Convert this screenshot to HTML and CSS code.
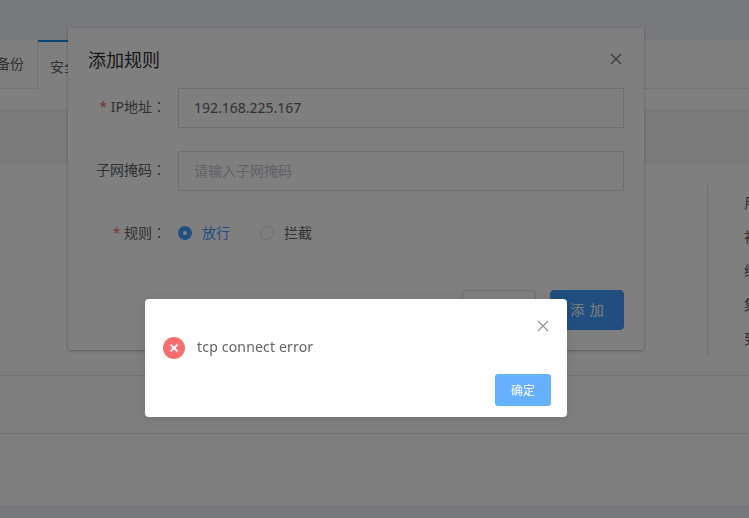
FILE: index.html
```html
<!DOCTYPE html>
<html lang="zh-CN">
<head>
<meta charset="utf-8">
<title>添加规则</title>
<link rel="stylesheet" href="styles.css">
</head>
<body>
<div class="page">
  <header class="topbar"></header>
  <nav class="tabs">
    <div class="tab tab-clipped"><span>数据备份</span></div>
    <div class="tab tab-active">安全设置</div>
  </nav>
  <div class="spacer"></div>
  <div class="band"></div>
  <main class="content">
    <div class="content-main"></div>
    <aside class="side">
      <p>用户</p>
      <p>视频</p>
      <p>级联</p>
      <p>集群</p>
      <p>到期</p>
    </aside>
  </main>
  <div class="row"></div>
  <div class="row row-tall"></div>
</div>

<section class="dialog">
  <header class="dialog-head">
    <h2 class="dialog-title">添加规则</h2>
    <svg class="close close-dark" viewBox="0 0 12 12"><path d="M1 1l10 10M11 1L1 11"/></svg>
  </header>
  <form class="form">
    <div class="field">
      <label class="label"><i class="req">*</i> IP地址<span class="colon" lang="zh-TW">：</span></label>
      <div class="input">192.168.225.167</div>
    </div>
    <div class="field">
      <label class="label">子网掩码<span class="colon" lang="zh-TW">：</span></label>
      <div class="input input-empty">请输入子网掩码</div>
    </div>
    <div class="field">
      <label class="label"><i class="req">*</i> 规则<span class="colon" lang="zh-TW">：</span></label>
      <div class="radios">
        <span class="radio radio-on"><b class="dot"></b><span class="radio-text">放行</span></span>
        <span class="radio"><b class="dot"></b><span class="radio-text">拦截</span></span>
      </div>
    </div>
  </form>
  <footer class="dialog-foot">
    <button type="button" class="btn">取 消</button>
    <button type="button" class="btn btn-primary">添 加</button>
  </footer>
</section>

<div class="mask"></div>

<section class="msgbox">
  <svg class="close close-light" viewBox="0 0 12 12"><path d="M1 1l10 10M11 1L1 11"/></svg>
  <div class="msg-body">
    <svg class="err" viewBox="0 0 22 22"><circle cx="11" cy="11" r="11"/><path d="M7.6 7.6l6.8 6.8M14.4 7.6l-6.8 6.8"/></svg>
    <p class="msg-text">tcp connect error</p>
  </div>
  <div class="msg-foot">
    <button type="button" class="msg-btn">确定</button>
  </div>
</section>
</body>
</html>
```
FILE: styles.css
```css
* { box-sizing: border-box; }
html, body { margin: 0; height: 518px; overflow: hidden; }
body {
  font-family: "Noto Sans", "Noto Sans CJK SC", sans-serif;
  font-size: 14px;
  color: #606266;
  background: #f0f3f9;
}
.page { height: 507px; background: #fff; border-bottom: 1px solid #e4e4e4; }
.topbar { height: 40px; background: #f0f3f9; }
.tabs { display: flex; align-items: flex-start; height: 49px; background: #fff; border-bottom: 1px solid #e8e8e8; }
.tab { display: flex; align-items: center; height: 49px; padding-bottom: 2px; font-size: 14px; white-space: nowrap; background: #fff; }
.tab-clipped { width: 38px; justify-content: flex-end; padding-right: 13px; overflow: hidden; border-right: 1px solid #e4e7ed; border-bottom: 1px solid #e4e7ed; }
.tab-active { padding: 0 13px 0 12px; border-top: 2px solid #1e88e5; }
.spacer { height: 20px; }
.band { height: 55px; background: #f4f4f4; }
.content { display: flex; height: 212px; border-bottom: 1px solid #e4e4e4; padding-top: 21px; overflow: hidden; }
.content-main { width: 707px; flex: none; }
.side { flex: none; width: 80px; height: 170px; border-left: 1px solid #e4e4e4; padding: 1px 0 0 36px; font-size: 14px; }
.side p { margin: 0; height: 34px; line-height: 34px; white-space: nowrap; }
.row { height: 58px; border-bottom: 1px solid #e4e4e4; }
.row-tall { height: 72px; border-bottom: 0; }

.dialog {
  position: absolute; left: 68px; top: 28px;
  display: flex; flex-direction: column;
  width: 576px; height: 322px; padding: 0 20px 20px;
  background: #fff; border-radius: 2px;
  box-shadow: 0 1px 3px rgba(0, 0, 0, .3);
}
.dialog-head { display: flex; justify-content: space-between; align-items: center; height: 60px; padding: 2px 0 0; }
.dialog-title { margin: 0; font-size: 18px; font-weight: 400; color: #303133; }
.close { width: 12px; height: 12px; fill: none; stroke-width: 1.1; }
.close-dark { margin-right: 2px; stroke: #6a6e76; }
.close-light { stroke: #909399; }
.form { display: flex; flex-direction: column; gap: 23px; flex: 1; }
.field { display: flex; align-items: center; height: 40px; }
.label { width: 78px; margin-right: 12px; padding-bottom: 4px; text-align: right; white-space: nowrap; }
.colon { font-family: "Noto Sans CJK TC", sans-serif; }
.req { font-style: normal; color: #f56c6c; }
.input { flex: 1; height: 40px; line-height: 37px; padding: 0 15px; border: 1px solid #dcdfe6; font-size: 14px; }
.input-empty { color: #c0c4cc; }
.radios { display: flex; gap: 30px; padding-bottom: 2px; }
.radio { display: flex; align-items: center; gap: 10px; font-size: 14px; }
.radio-text { padding-bottom: 2px; }
.radio-on { color: #409eff; }
.dot { display: block; width: 14px; height: 14px; border: 1px solid #dcdfe6; border-radius: 50%; background: #fff; }
.radio-on .dot { border: 5px solid #409eff; }
.dialog-foot { display: flex; justify-content: flex-end; gap: 14px; }
.btn { width: 74px; height: 40px; padding: 0 0 2px; font: inherit; word-spacing: 2px; color: #606266; background: #fff; border: 1px solid #dcdfe6; border-radius: 4px; }
.btn-primary { color: #fff; background: #409eff; border-color: #409eff; }

.mask { position: fixed; inset: 0; background: rgba(0, 0, 0, .5); }

.msgbox {
  position: absolute; left: 145px; top: 299px;
  display: flex; flex-direction: column;
  width: 422px; height: 118px; padding: 20px 16px 11px 18px;
  background: #fff; border-radius: 4px;
  box-shadow: 0 2px 12px rgba(0, 0, 0, .1);
}
.msgbox .close { align-self: flex-end; margin: 1px 2px 0 0; }
.msg-body { display: flex; align-items: center; gap: 12px; margin-top: 5px; height: 22px; }
.err { width: 22px; height: 22px; flex: none; }
.err circle { fill: #f96f6f; }
.err path { fill: none; stroke: #fff; stroke-width: 2; }
.msg-text { margin: 0; padding-bottom: 4px; font-size: 14px; letter-spacing: .18px; color: #606266; }
.msg-foot { display: flex; justify-content: flex-end; margin-top: auto; }
.msg-btn { width: 56px; height: 32px; padding: 0; font: inherit; font-size: 12px; color: #fff; background: #66b1ff; border: 0; border-radius: 3px; }
```
